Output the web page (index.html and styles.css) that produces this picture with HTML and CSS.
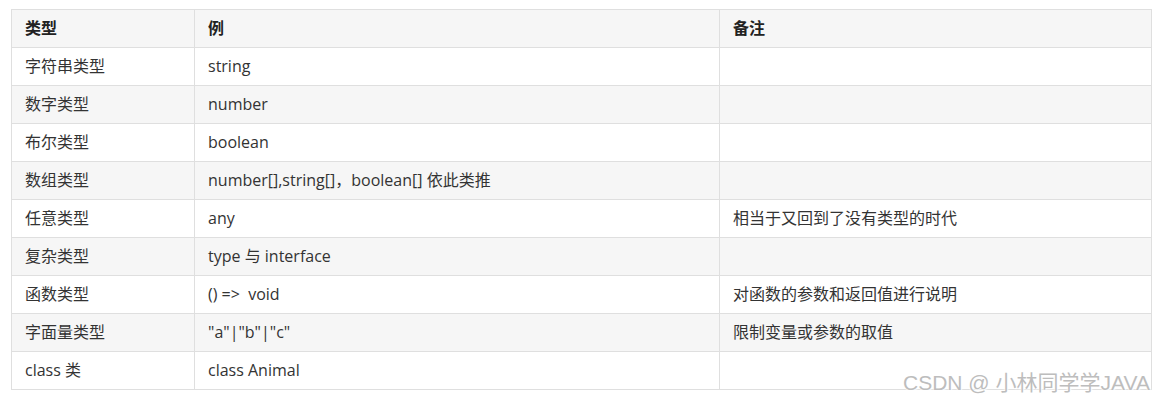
FILE: index.html
```html
<!DOCTYPE html>
<html lang="zh-CN">
<head>
<meta charset="utf-8">
<link rel="stylesheet" href="styles.css">
</head>
<body>
<div class="page">
  <table class="types">
    <colgroup>
      <col class="c1"><col class="c2"><col class="c3">
    </colgroup>
    <thead>
      <tr><th>类型</th><th>例</th><th>备注</th></tr>
    </thead>
    <tbody>
      <tr><td>字符串类型</td><td>string</td><td></td></tr>
      <tr><td>数字类型</td><td>number</td><td></td></tr>
      <tr><td>布尔类型</td><td>boolean</td><td></td></tr>
      <tr><td>数组类型</td><td>number[],string[]，boolean[] 依此类推</td><td></td></tr>
      <tr><td>任意类型</td><td>any</td><td>相当于又回到了没有类型的时代</td></tr>
      <tr><td>复杂类型</td><td>type 与 interface</td><td></td></tr>
      <tr><td>函数类型</td><td>() =&gt;&nbsp; void</td><td>对函数的参数和返回值进行说明</td></tr>
      <tr><td>字面量类型</td><td>"a"|"b"|"c"</td><td>限制变量或参数的取值</td></tr>
      <tr><td>class 类</td><td>class Animal</td><td></td></tr>
    </tbody>
  </table>
  <div class="watermark">CSDN @ 小林同学学JAVA</div>
</div>
</body>
</html>
```
FILE: styles.css
```css
html, body {
  margin: 0;
  padding: 0;
  background: #fff;
}
.page {
  position: relative;
  width: 1159px;
  height: 403px;
  padding: 9px 0 0 11px;
  box-sizing: border-box;
  overflow: hidden;
  font-family: "Open Sans", "Noto Sans CJK SC", sans-serif;
  font-size: 16px;
  color: #333;
}
.types {
  border-collapse: collapse;
  width: 1140px;
  table-layout: fixed;
}
.types .c1 { width: 183px; }
.types .c2 { width: 525px; }
.types .c3 { width: 432px; }
.types th, .types td {
  border: 1px solid #dfdfdf;
  padding: 8px 13px;
  line-height: 21px;
  height: 21px;
  text-align: left;
  vertical-align: middle;
  white-space: nowrap;
}
.types th {
  font-weight: bold;
  background: #f6f6f6;
  color: #222;
}
.types tbody tr:nth-child(even) td {
  background: #f6f6f6;
}
.watermark {
  position: absolute;
  left: 903px;
  top: 371px;
  white-space: nowrap;
  font-family: "Liberation Sans", "Noto Sans CJK SC", sans-serif;
  font-size: 21px;
  line-height: 24px;
  color: #bdbdbd;
  text-shadow: 0 0 2px #fff, 0 0 2px #fff, 1px 1px 2px #fff;
}
```
